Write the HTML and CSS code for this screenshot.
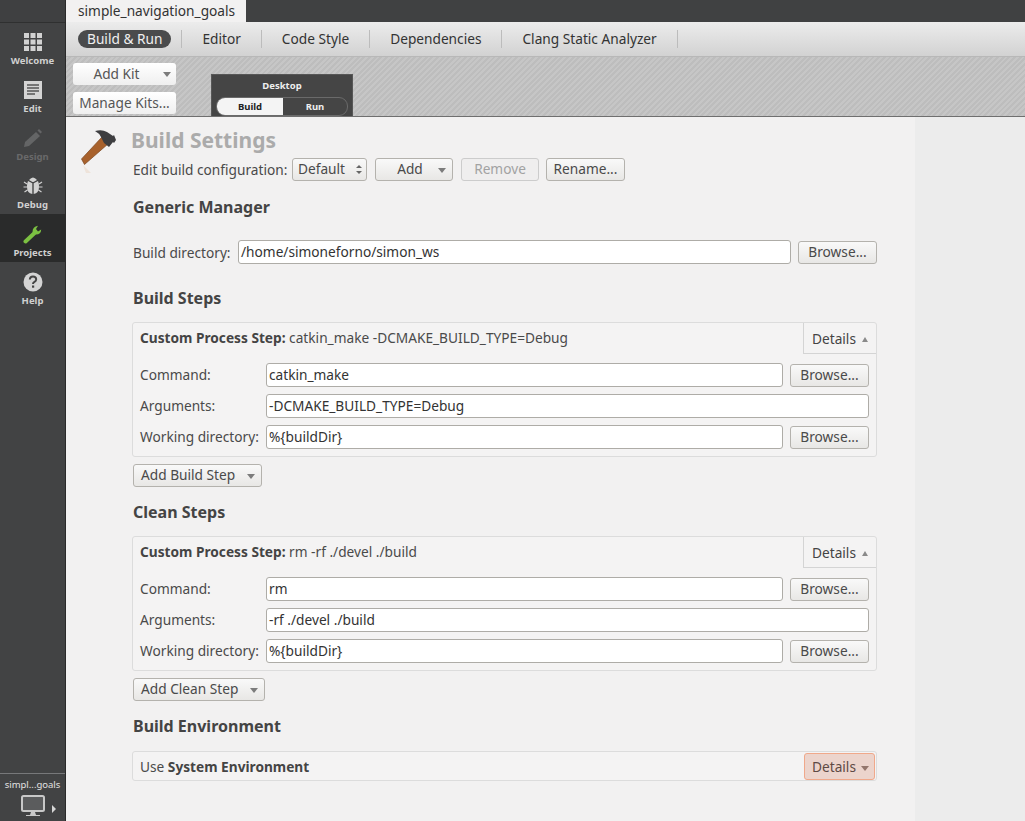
FILE: index.html
```html
<!doctype html>
<html lang="en">
	<head>
		<meta charset="utf-8" />
		<title>Projects - Qt Creator</title>
		<link rel="stylesheet" href="styles.css">
	</head>

	<body>
		<!-- Mode bar -->
		<div class="modebar">
			<div class="mode">
				<svg width="20" height="20" viewBox="0 0 20 20" fill="#d2d2d2">
					<rect x="1" y="1" width="5" height="5" /><rect x="7.5" y="1" width="5" height="5" /><rect x="14" y="1" width="5" height="5" />
					<rect x="1" y="7.5" width="5" height="5" /><rect x="7.5" y="7.5" width="5" height="5" /><rect x="14" y="7.5" width="5" height="5" />
					<rect x="1" y="14" width="5" height="5" /><rect x="7.5" y="14" width="5" height="5" /><rect x="14" y="14" width="5" height="5" />
				</svg>
				<span>Welcome</span>
			</div>
			<div class="mode">
				<svg width="20" height="20" viewBox="0 0 20 20">
					<rect x="1" y="1" width="18" height="18" fill="#d4d4d4" />
					<path d="M4 5h12M4 8h12M4 11h12M4 14h8" stroke="#555" stroke-width="1.5" />
				</svg>
				<span>Edit</span>
			</div>
			<div class="mode disabled">
				<svg width="20" height="20" viewBox="0 0 20 20" fill="#646566">
					<path d="M1 19l1-5L13 4l4 4L6 18z" /><path d="M14.5 2.5L16 1l3 3-1.500 1.500z" />
				</svg>
				<span>Design</span>
			</div>
			<div class="mode">
				<svg width="20" height="20" viewBox="0 0 20 20" fill="#d2d2d2">
					<path d="M6 4q4-5 8 0l-3.500 2h-1z" />
					<path d="M5 5l4.300 2.200V18Q4 17 4 11q0-4 1-6z" /><path d="M15 5l-4.300 2.200V18q5.300-1 5.300-7 0-4-1-6z" />
					<path d="M1 6l3 2M0.500 11H4M1.500 16l3-2M19 6l-3 2M19.500 11H16M18.500 16l-3-2" stroke="#d2d2d2" stroke-width="1.200" />
				</svg>
				<span>Debug</span>
			</div>
			<div class="mode active">
				<svg width="20" height="20" viewBox="0 0 20 20">
					<path d="M2.500 17.500L11 9.500" stroke="#7cc142" stroke-width="4" stroke-linecap="round" />
					<path d="M9.500 8Q9.500 2.500 15 1.800L13 5l2 2.500 3.200-2Q18 11 12 10.500z" fill="#7cc142" />
				</svg>
				<span>Projects</span>
			</div>
			<div class="mode">
				<svg width="20" height="20" viewBox="0 0 20 20">
					<circle cx="10" cy="10" r="9.500" fill="#d4d4d4" />
					<path d="M6.800 7.500Q7 4.500 10 4.500t3.200 2.800q0 1.600-1.700 2.500-1.500.8-1.500 2.200" fill="none" stroke="#444" stroke-width="2" />
					<rect x="9" y="13.500" width="2.200" height="2.200" fill="#444" />
				</svg>
				<span>Help</span>
			</div>

			<div class="target">
				<div class="target-name">simpl...goals</div>
				<div class="target-icon">
					<svg width="24" height="21" viewBox="0 0 24 21">
						<rect x="1" y="1" width="22" height="15" rx="1.500" fill="#5b5c5d" stroke="#c8c8c8" stroke-width="2" />
						<path d="M10 17h4l1 3H9z" fill="#c8c8c8" />
						<path d="M5 20h14v1H5z" fill="#c8c8c8" />
					</svg>
					<i class="target-arrow"></i>
				</div>
			</div>
		</div>

		<div class="page">
			<div class="tabbar">
				<div class="tab">simple_navigation_goals</div>
			</div>

			<div class="navbar">
				<span class="nav-item current">Build &amp; Run</span>
				<span class="nav-item">Editor</span>
				<span class="nav-item">Code Style</span>
				<span class="nav-item">Dependencies</span>
				<span class="nav-item">Clang Static Analyzer</span>
			</div>

			<div class="kitbar">
				<div class="kit-buttons">
					<div class="kit-btn add-kit">Add Kit <i class="arrow-down"></i></div>
					<div class="kit-btn">Manage Kits...</div>
				</div>
				<div class="kit-panel">
					<div class="kit-title">Desktop</div>
					<div class="kit-toggle">
						<span class="kit-build">Build</span>
						<span class="kit-run">Run</span>
					</div>
				</div>
			</div>

			<div class="content">
				<div class="settings">
					<!-- Build settings header -->
					<div class="title-row">
						<svg class="hammer" width="44" height="48" viewBox="0 0 44 48">
							<path d="M2 37l8 8H5z" fill="#eee3da" />
							<path d="M0.500 31L21 9l6.500 6.500L3.500 36.500z" fill="#a8612c" stroke="#7a451e" stroke-width=".7" />
							<path d="M14 3q7-2 12 1l6 4 1-1 2 5-2 3-1-1-4 5-5-4-3-6q-2-4-6-6z" fill="#3e3e40" />
						</svg>
						<div class="title-main">
							<h1>Build Settings</h1>
							<div class="config-row">
								<span class="label">Edit build configuration:</span>
								<div class="btn combo w-combo">Default <i class="spin"></i></div>
								<div class="btn combo w-add"><span class="center">Add</span> <i class="arrow-down"></i></div>
								<div class="btn w-remove disabled">Remove</div>
								<div class="btn w-rename">Rename...</div>
							</div>
						</div>
					</div>

					<h2 class="first">Generic Manager</h2>
					<div class="dir-row">
						<span class="label">Build directory:</span>
						<div class="input grow">/home/simoneforno/simon_ws</div>
						<div class="btn browse">Browse...</div>
					</div>

					<h2 class="steps">Build Steps</h2>
					<div class="step">
						<div class="step-head">
							<div class="step-sum"><b>Custom Process Step:</b> catkin_make -DCMAKE_BUILD_TYPE=Debug</div>
							<div class="details">Details <i class="arrow-up"></i></div>
						</div>
						<div class="step-body">
							<div class="field"><span class="label">Command:</span><div class="input grow">catkin_make</div><div class="btn browse">Browse...</div></div>
							<div class="field"><span class="label">Arguments:</span><div class="input grow">-DCMAKE_BUILD_TYPE=Debug</div></div>
							<div class="field"><span class="label">Working directory:</span><div class="input grow">%{buildDir}</div><div class="btn browse">Browse...</div></div>
						</div>
					</div>
					<div class="btn combo add-step w-build-step">Add Build Step <i class="arrow-down"></i></div>

					<h2 class="clean">Clean Steps</h2>
					<div class="step">
						<div class="step-head">
							<div class="step-sum"><b>Custom Process Step:</b> rm -rf ./devel ./build</div>
							<div class="details">Details <i class="arrow-up"></i></div>
						</div>
						<div class="step-body">
							<div class="field"><span class="label">Command:</span><div class="input grow">rm</div><div class="btn browse">Browse...</div></div>
							<div class="field"><span class="label">Arguments:</span><div class="input grow">-rf ./devel ./build</div></div>
							<div class="field"><span class="label">Working directory:</span><div class="input grow">%{buildDir}</div><div class="btn browse">Browse...</div></div>
						</div>
					</div>
					<div class="btn combo add-step w-clean-step">Add Clean Step <i class="arrow-down"></i></div>

					<h2 class="clean env-title">Build Environment</h2>
					<div class="step env">
						<div class="step-sum">Use <b>System Environment</b></div>
						<div class="details hot">Details <i class="arrow-down"></i></div>
					</div>
				</div>
			</div>
		</div>
	</body>
</html>
```

FILE: styles.css
```css
html,
body {
	height: 100%;
}

body {
	margin: 0;
	display: flex;
	height: 100vh;
	overflow: hidden;
	font-family: "Noto Sans", "Open Sans", sans-serif;
	font-size: 13.7px;
	color: #4a4a4a;
	background-color: #ececec;
}

/* Mode bar */
.modebar {
	width: 66px;
	flex: none;
	display: flex;
	flex-direction: column;
	padding-top: 22px;
	box-sizing: border-box;
	background-color: #424344;
	border-right: 1px solid #2a2a2a;
	box-shadow: inset 0 22px 0 #3f4041;
	position: relative;
}

.mode {
	height: 48px;
	display: flex;
	flex-direction: column;
	align-items: center;
	justify-content: flex-end;
	gap: 2px;
	padding-bottom: 2px;
	box-sizing: border-box;
	color: #d0d0d0;
	font-size: 9.5px;
	font-weight: 700;
}

.mode:first-child {
	border-top: 1px solid #2f3030;
}

.mode span {
	line-height: 14px;
}

.mode.disabled {
	color: #69696a;
}

.mode.active {
	background-color: #2a2b2b;
}

.target {
	margin-top: auto;
	height: 47px;
	border-top: 1px solid #77787a;
	color: #e2e2e2;
	font-size: 9.5px;
	text-align: center;
	overflow: hidden;
}

.target-name {
	margin-top: 4px;
	line-height: 14px;
}

.target-icon {
	display: flex;
	justify-content: center;
	margin-top: 3px;
	position: relative;
}

.target-arrow {
	width: 0;
	height: 0;
	border-left: 4px solid #d6d6d6;
	border-top: 4px solid transparent;
	border-bottom: 4px solid transparent;
	position: absolute;
	left: 52px;
	top: 10px;
}

/* Right side */
.page {
	flex: 1;
	min-width: 0;
	display: flex;
	flex-direction: column;
}

.tabbar {
	height: 22px;
	flex: none;
	background-color: #404142;
	display: flex;
}

.tab {
	width: 180px;
	background-color: #f2f1f1;
	color: #333;
	line-height: 22px;
	padding-left: 12px;
	box-sizing: border-box;
}

.navbar {
	height: 35px;
	flex: none;
	box-sizing: border-box;
	display: flex;
	align-items: center;
	padding-left: 12px;
	background: linear-gradient(#ececec, #d2d2d2);
	border-bottom: 1px solid #b8b8b8;
	color: #333;
}

.nav-item {
	padding: 0 20px;
	border-right: 1px solid #bcbcbc;
	line-height: 18px;
}

.nav-item.current {
	padding: 0 9px;
	margin-right: 10px;
	border: 0;
	border-radius: 9px;
	background-color: #4a4b4c;
	color: #f0f0f0;
}

.nav-item.current + .nav-item {
	border-left: 1px solid #bcbcbc;
}

.kitbar {
	height: 60px;
	flex: none;
	box-sizing: border-box;
	display: flex;
	padding: 6px 0 0 7px;
	background: repeating-linear-gradient(135deg, #c6c6c6 0 2px, #bdbdbd 2px 4px);
	border-bottom: 1px solid #6f6f6f;
}

.kit-buttons {
	width: 103px;
	display: flex;
	flex-direction: column;
	gap: 7px;
}

.kit-btn {
	height: 22px;
	border-radius: 3px;
	background: linear-gradient(#fff, #efefef);
	color: #555;
	text-align: center;
	line-height: 22px;
	position: relative;
}

.add-kit {
	padding-right: 16px;
	width: 87px;
}

.add-kit .arrow-down {
	position: absolute;
	right: 5px;
	top: 9px;
}

.kit-panel {
	width: 142px;
	margin: 11px 0 0 35px;
	box-sizing: border-box;
	background-color: #454545;
	border: 1px solid #575757;
	border-bottom: 0;
	padding: 0 4px;
	color: #eee;
	font-size: 9.5px;
	font-weight: 700;
	text-align: center;
}

.kit-title {
	line-height: 22px;
}

.kit-toggle {
	display: flex;
	height: 17px;
	line-height: 17px;
	border: 1px solid #6a6a6a;
	border-radius: 9px;
	overflow: hidden;
}

.kit-build {
	width: 66px;
	background-color: #f4f4f4;
	color: #222;
}

.kit-run {
	flex: 1;
}

.content {
	flex: 1;
	min-height: 0;
	background-color: #ececec;
}

.settings {
	width: 849px;
	height: 100%;
	box-sizing: border-box;
	padding-left: 67px;
	background-color: #f2f1f1;
}

.title-row {
	display: flex;
	padding-top: 11px;
}

.hammer {
	width: 44px;
	margin: 0 0 0 -52px;
	flex: none;
	overflow: visible;
}

.title-main {
	margin-left: 8px;
}

h1 {
	margin: 0 0 0 -2px;
	font-size: 21px;
	line-height: 25px;
	font-weight: 700;
	color: #ababab;
}

.config-row {
	display: flex;
	align-items: center;
	margin-top: 5px;
	gap: 8px;
}

.config-row .label {
	width: 151px;
	white-space: nowrap;
}

.btn {
	height: 23px;
	box-sizing: border-box;
	border: 1px solid #b4b2ad;
	border-radius: 3px;
	background: linear-gradient(#f9f9f9, #e8e7e5);
	color: #4a4a4a;
	line-height: 20px;
	text-align: center;
	position: relative;
	flex: none;
}

.btn.disabled {
	color: #a2a2a2;
	border-color: #ccc;
	background: #efeeee;
}

.combo {
	text-align: left;
	padding-left: 7px;
}

.w-combo {
	width: 75px;
	padding-left: 5px;
}

.w-add {
	width: 78px;
}

.w-add .center {
	display: block;
	text-align: center;
	padding-right: 15px;
}

.w-remove {
	width: 78px;
}

.w-rename {
	width: 79px;
	margin-left: -1px;
}

.w-build-step {
	width: 129px;
}

.w-clean-step {
	width: 132px;
}

.combo .arrow-down {
	position: absolute;
	right: 6px;
	top: 9px;
}

.spin {
	position: absolute;
	right: 4px;
	top: 6px;
	width: 0;
	height: 0;
	border-left: 3px solid transparent;
	border-right: 3px solid transparent;
	border-bottom: 3px solid #666;
}

.spin::after {
	content: "";
	position: absolute;
	left: -3px;
	top: 6px;
	border-left: 3px solid transparent;
	border-right: 3px solid transparent;
	border-top: 3px solid #666;
}

.arrow-down {
	display: inline-block;
	width: 0;
	height: 0;
	border-left: 4px solid transparent;
	border-right: 4px solid transparent;
	border-top: 5px solid #7c7c7c;
}

.arrow-up {
	display: inline-block;
	width: 0;
	height: 0;
	margin-left: 2px;
	vertical-align: 2px;
	border-left: 3.500px solid transparent;
	border-right: 3.500px solid transparent;
	border-bottom: 5px solid #8a8a8a;
}

h2 {
	margin: 0;
	font-size: 16px;
	line-height: 20px;
	font-weight: 700;
	color: #444;
}

h2.first {
	margin-top: 16px;
}

h2.steps {
	margin-top: 24px;
	margin-bottom: 14px;
}

h2.clean {
	margin-top: 15px;
	margin-bottom: 14px;
}

h2.env-title {
	margin-bottom: 15px;
}

.dir-row {
	display: flex;
	align-items: center;
	margin-top: 23px;
	gap: 7px;
	width: 744px;
}

.dir-row .label {
	width: 98px;
	white-space: nowrap;
}

.input {
	height: 24px;
	box-sizing: border-box;
	border: 1px solid #aeaca7;
	border-radius: 3px;
	background-color: #fff;
	color: #333;
	line-height: 22px;
	padding-left: 2px;
}

.grow {
	flex: 1;
	min-width: 0;
}

.browse {
	width: 79px;
}

.step {
	width: 745px;
	margin-left: -1px;
	box-sizing: border-box;
	border: 1px solid #dcdcdc;
	border-radius: 3px;
	background-color: #f4f3f3;
}

.step-head {
	display: flex;
	height: 31px;
}

.step-sum {
	flex: 1;
	padding: 5px 0 0 7px;
	line-height: 20px;
}

.step-sum b {
	color: #444;
}

.details {
	width: 73px;
	flex: none;
	box-sizing: border-box;
	border-left: 1px solid #d4d4d4;
	border-bottom: 1px solid #d4d4d4;
	padding-left: 8px;
	line-height: 31px;
	color: #444;
}

.step-body {
	padding: 9px 7px 7px 7px;
	display: flex;
	flex-direction: column;
	gap: 7px;
}

.field {
	display: flex;
	align-items: center;
	gap: 7px;
}

.field .label {
	width: 119px;
	flex: none;
	white-space: nowrap;
	padding-bottom: 1px;
}

.add-step {
	margin-top: 7px;
}

.env {
	display: flex;
	height: 30px;
}

.env .details {
	height: 27px;
	margin: 1px 1px 0 0;
	border: 1px solid #f0a88a;
	border-radius: 3px;
	background-color: #ecd4cc;
	line-height: 26px;
	width: 71px;
	color: #5e4a44;
	padding-left: 7px;
}

.env .arrow-down {
	margin-left: 1px;
	border-top-color: #94766c;
	vertical-align: 1px;
}
```
